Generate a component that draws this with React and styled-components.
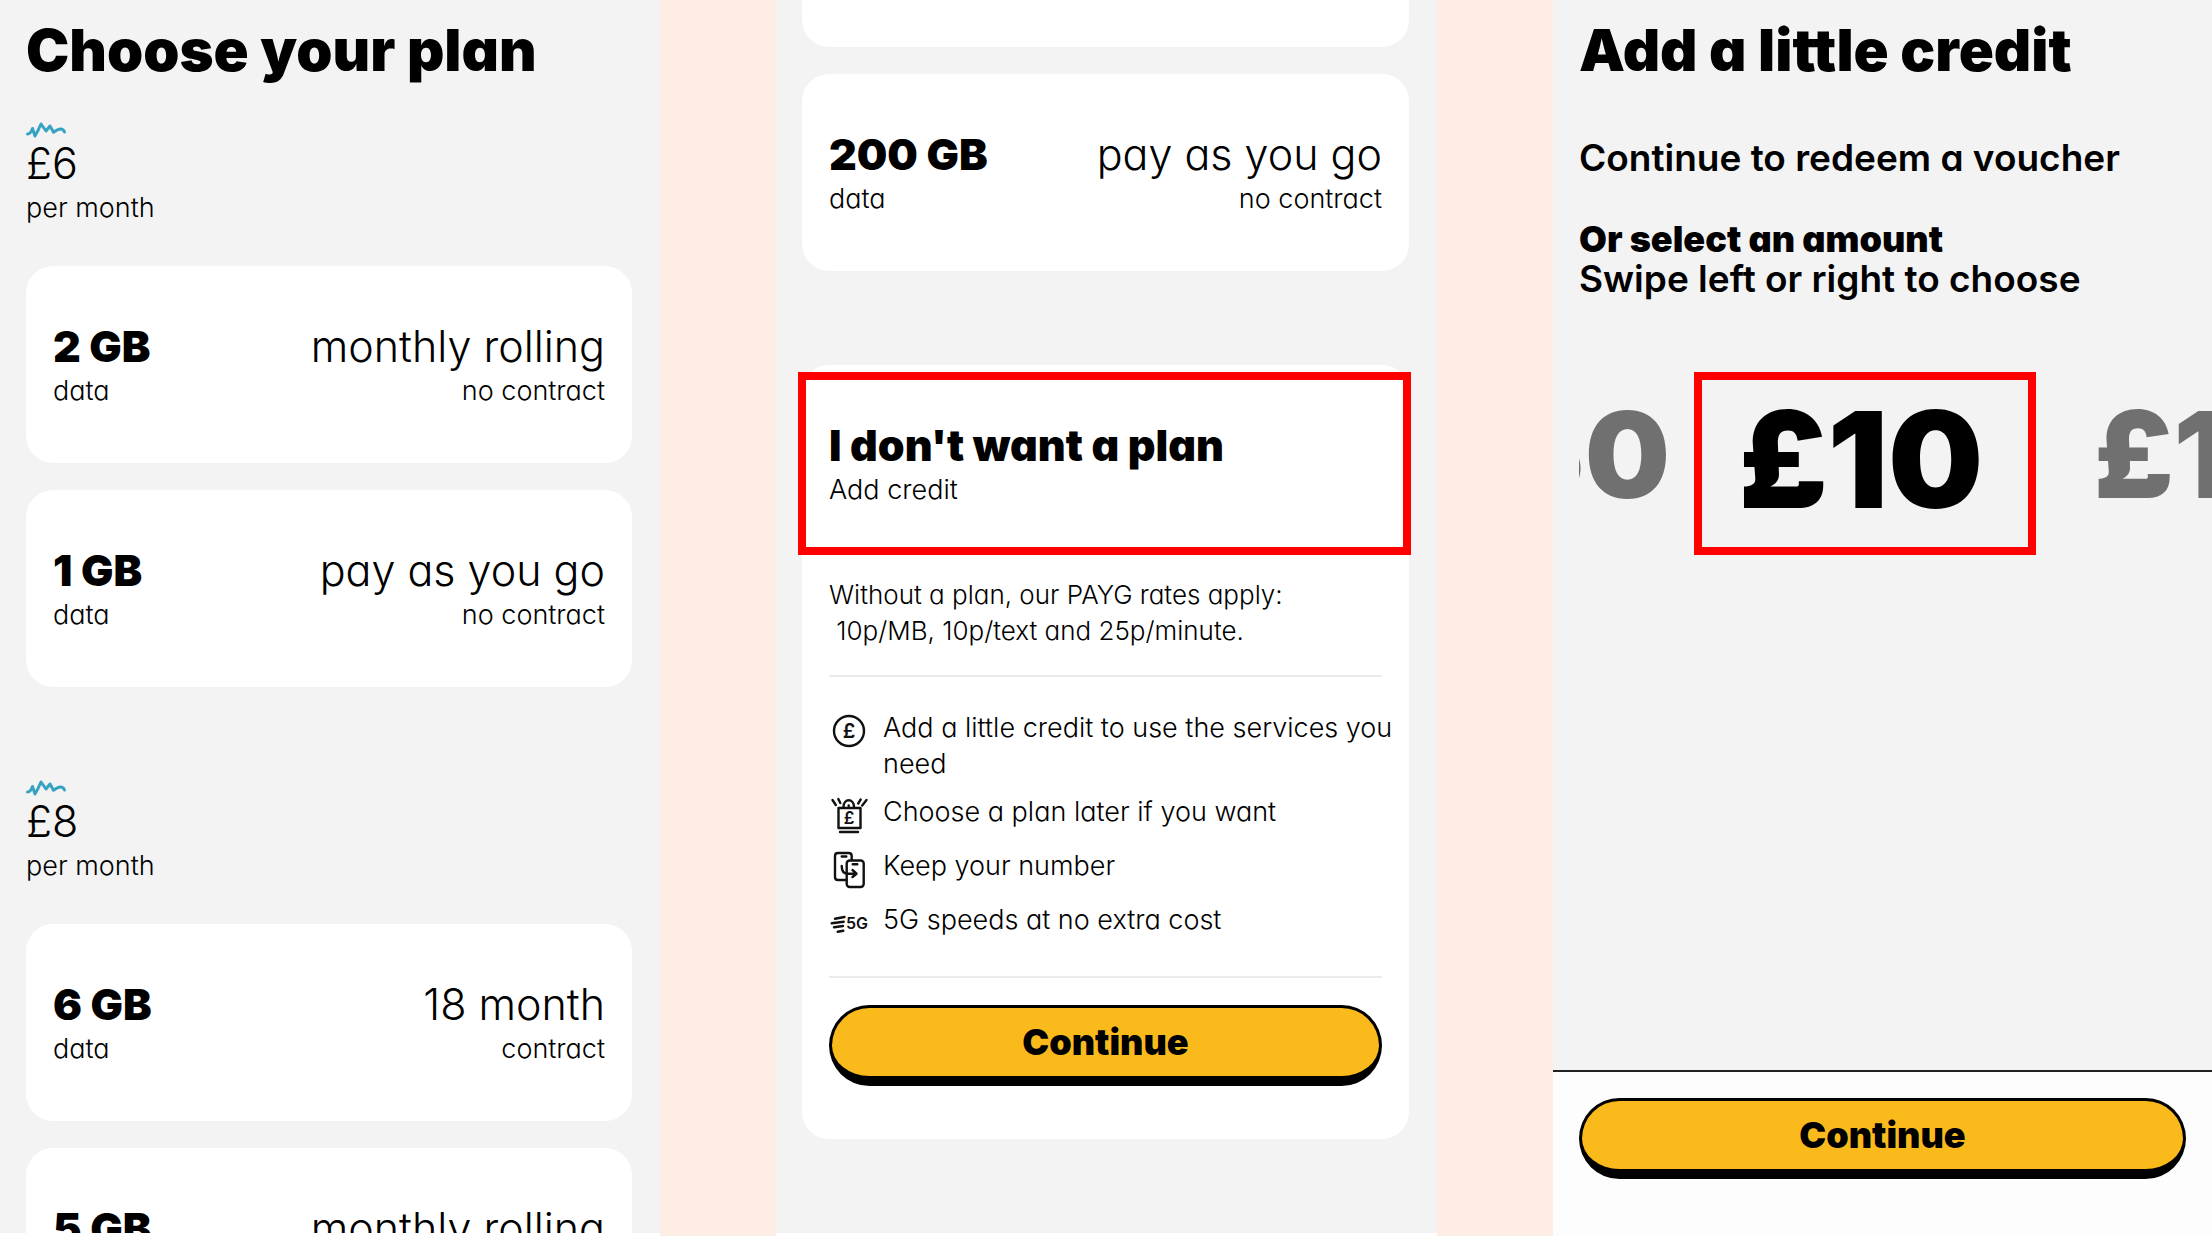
import styled, { createGlobalStyle } from 'styled-components'

const GlobalStyle = createGlobalStyle`
  * {
    box-sizing: border-box;
  }

  body {
    margin: 0;
    background: #fdede4;
    color: #000;
    font-family: Inter, 'Open Sans', sans-serif;
    font-feature-settings: 'cv11' 1;
  }

  h1, h2, h3, p, ul {
    margin: 0;
    padding: 0;
  }
`

const Screens = styled.main`
  display: grid;
  grid-template-columns: 660fr 661fr 659fr;
  column-gap: 116px;
  height: 100vh;
  overflow: hidden;
`

const Screen = styled.section`
  display: flex;
  flex-direction: column;
  min-width: 0;
  padding: 0 28px 0 26px;
  overflow: hidden;
  background: #f3f3f3;
  border-bottom: ${({ $edge }) => ($edge ? '3px solid #fff' : 'none')};
`

const Title = styled.h1`
  padding-top: 20px;
  font-size: 58px;
  font-weight: 900;
  line-height: 60px;
`

const PlanGroup = styled.section`
  margin-top: ${({ $first }) => ($first ? 42 : 93)}px;
`

const Squiggle = styled.svg`
  display: block;
  width: 40px;
  height: 16px;
  fill: none;
  stroke: #35a3c1;
  stroke-width: 3;
  stroke-linecap: round;
  stroke-linejoin: round;
`

const Price = styled.h2`
  font-size: 43px;
  font-weight: 300;
  line-height: 50px;
`

const Small = styled.p`
  font-size: 27px;
  font-weight: 300;
  line-height: 40px;
`

const Cards = styled.div`
  display: flex;
  flex-direction: column;
  gap: 27px;
  margin-top: 38px;
`

const Card = styled.article`
  display: flex;
  flex-shrink: 0;
  justify-content: space-between;
  padding: 55px 27px 52px;
  background: #fff;
  border-radius: 27px;
`

const CardEnd = styled.div`
  flex-shrink: 0;
  height: 47px;
  margin-bottom: 27px;
  background: #fff;
  border-radius: 0 0 27px 27px;
`

const Terms = styled.div`
  text-align: right;
`

const Big = styled.h3`
  font-size: 43px;
  font-weight: ${({ $light }) => ($light ? 300 : 900)};
  line-height: 50px;
  white-space: nowrap;
`

const CreditCard = styled.article`
  position: relative;
  margin-top: 94px;
  padding: 55px 27px 53px;
  background: #fff;
  border-radius: 27px;
`

const Highlight = styled.div`
  position: absolute;
  top: 7px;
  left: -4px;
  right: -2px;
  height: 183px;
  border: 8px solid #f00;
`

const Rates = styled.p`
  margin-top: 67px;
  font-size: 26px;
  font-weight: 300;
  line-height: 36px;
`

const RateLine = styled.span`
  display: block;
  white-space: pre;
`

const Rule = styled.hr`
  height: 2px;
  margin: ${({ $last }) => ($last ? '32px 0 27px' : '26px 0 33px')};
  border: 0;
  background: #ebebeb;
`

const Benefits = styled.ul`
  display: flex;
  flex-direction: column;
  gap: 12px;
  margin-right: -24px;
  list-style: none;
`

const Benefit = styled.li`
  display: grid;
  grid-template-columns: 54px 1fr;
  min-height: 42px;
  font-size: 27px;
  font-weight: 300;
  line-height: 36px;
`

const Icon = styled.svg`
  width: 42px;
  height: 42px;
  fill: none;
  stroke: #111;
  stroke-width: 2.4;
  stroke-linecap: round;
  stroke-linejoin: round;

  text {
    fill: #111;
    stroke: none;
    font-weight: 600;
    text-anchor: middle;
  }
`

const ContinueButton = styled.button`
  display: block;
  flex-shrink: 0;
  width: 100%;
  height: 81px;
  padding: 0;
  border: 3px solid #000;
  border-bottom-width: 10px;
  border-radius: 41px;
  background: #fbba1c;
  color: #000;
  font: inherit;
  font-size: 36px;
  font-weight: 900;
  cursor: pointer;
`

const Lead = styled.p`
  margin-top: ${({ $first }) => ($first ? 58 : 41)}px;
  font-size: 37px;
  font-weight: 600;
  line-height: 40px;
  white-space: nowrap;

  strong {
    display: block;
    font-size: 36px;
    font-weight: 900;
  }
`

const Carousel = styled.div`
  display: flex;
  align-items: flex-start;
  margin: 73px -28px 0 0;
  overflow: hidden;
`

const Amount = styled.button`
  display: flex;
  flex: none;
  justify-content: flex-end;
  width: ${({ $side }) => ($side === 'left' ? '91px' : 'auto')};
  margin-left: ${({ $side }) => ($side === 'right' ? 58 : 0)}px;
  padding: 18px 0 0;
  overflow: hidden;
  border: 0;
  background: none;
  color: #707070;
  font: inherit;
  font-size: 120px;
  font-weight: 900;
  line-height: 130px;
`

const SelectedAmount = styled(Amount)`
  justify-content: center;
  width: 342px;
  height: 183px;
  margin-left: 24px;
  padding: 7px 8px 0 0;
  border: 8px solid #f00;
  color: #000;
  font-size: 134px;
  line-height: 144px;
`

const Footer = styled.footer`
  margin: auto -28px 0 -26px;
  padding: 26px 26px 57px;
  border-top: 2px solid #222;
  background: #fdfdfe;
`

const groups = [
  {
    price: '£6',
    plans: [
      { data: '2 GB', term: 'monthly rolling', note: 'no contract' },
      { data: '1 GB', term: 'pay as you go', note: 'no contract' },
    ],
  },
  {
    price: '£8',
    plans: [
      { data: '6 GB', term: '18 month', note: 'contract' },
      { data: '5 GB', term: 'monthly rolling', note: 'no contract' },
    ],
  },
]

function PlanCard({ data, term, note }) {
  return (
    <Card>
      <div>
        <Big>{data}</Big>
        <Small>data</Small>
      </div>
      <Terms>
        <Big as="p" $light>{term}</Big>
        <Small>{note}</Small>
      </Terms>
    </Card>
  )
}

function CoinIcon() {
  return (
    <Icon viewBox="0 0 42 42" aria-hidden="true">
      <circle cx="20" cy="21" r="15" />
      <text x="20" y="28" fontSize="20">£</text>
    </Icon>
  )
}

function BagIcon() {
  return (
    <Icon viewBox="0 0 42 42" aria-hidden="true">
      <path d="M9.5 14h22v20h-22zM11 38h18" />
      <path d="M14.5 13c0-9 10.5-9 10.5 0M19.7 11.5v.5" />
      <path d="M3.5 6l3.3 5M9.3 5l2 4M31.7 5.5l-2.5 4M37.5 6l-4.3 5.5" />
      <text x="20" y="30" fontSize="17">£</text>
    </Icon>
  )
}

function PhonesIcon() {
  return (
    <Icon viewBox="0 0 42 42" aria-hidden="true">
      <path d="M17.5 32H9q-3 0-3-3V8q0-3 3-3h10.7q3 0 3 3v4" />
      <rect x="17.7" y="12.5" width="17" height="26.5" rx="3" />
      <path d="M12.7 8.5h4.6M23.7 16.3h4.6" />
      <path d="M12.7 18c0 5 2 7.7 6 7.7H27M23.5 22l4 3.7-4 3.3" />
    </Icon>
  )
}

function SpeedIcon() {
  return (
    <Icon viewBox="0 0 42 42" aria-hidden="true">
      <path d="M6 16.7L15.5 15M2.7 21.3l12-1.6M5 25.3l9-1.3M8.7 29.7l5.6-1" />
      <text x="28" y="27" fontSize="16">5G</text>
    </Icon>
  )
}

function ChoosePlan() {
  return (
    <Screen $edge>
      <Title>Choose your plan</Title>
      {groups.map((group, i) => (
        <PlanGroup key={group.price} $first={i === 0}>
          <Squiggle viewBox="0 0 40 16" aria-hidden="true">
            <path d="M1.5 12q3 0 5-5.5L9 14Q12 9 15 2l5 7 4-5 3.5 6.3Q36 4 38.5 10" />
          </Squiggle>
          <Price>{group.price}</Price>
          <Small>per month</Small>
          <Cards>
            {group.plans.map((plan) => <PlanCard key={plan.data} {...plan} />)}
          </Cards>
        </PlanGroup>
      ))}
    </Screen>
  )
}

function NoPlan() {
  return (
    <Screen $edge>
      <CardEnd />
      <PlanCard data="200 GB" term="pay as you go" note="no contract" />
      <CreditCard>
        <Highlight />
        <Big>I don't want a plan</Big>
        <Small>Add credit</Small>
        <Rates>
          <RateLine>Without a plan, our PAYG rates apply:</RateLine>
          <RateLine>{' 10p/MB, 10p/text and 25p/minute.'}</RateLine>
        </Rates>
        <Rule />
        <Benefits>
          <Benefit><CoinIcon />Add a little credit to use the services you need</Benefit>
          <Benefit><BagIcon />Choose a plan later if you want</Benefit>
          <Benefit><PhonesIcon />Keep your number</Benefit>
          <Benefit><SpeedIcon />5G speeds at no extra cost</Benefit>
        </Benefits>
        <Rule $last />
        <ContinueButton type="button">Continue</ContinueButton>
      </CreditCard>
    </Screen>
  )
}

function AddCredit() {
  return (
    <Screen>
      <Title>Add a little credit</Title>
      <Lead $first>Continue to redeem a voucher</Lead>
      <Lead>
        <strong>Or select an amount</strong>
        Swipe left or right to choose
      </Lead>
      <Carousel>
        <Amount type="button" $side="left">£50</Amount>
        <SelectedAmount type="button" aria-pressed="true">£10</SelectedAmount>
        <Amount type="button" $side="right">£15</Amount>
      </Carousel>
      <Footer>
        <ContinueButton type="button">Continue</ContinueButton>
      </Footer>
    </Screen>
  )
}

export default function App() {
  return (
    <>
      <GlobalStyle />
      <Screens>
        <ChoosePlan />
        <NoPlan />
        <AddCredit />
      </Screens>
    </>
  )
}
